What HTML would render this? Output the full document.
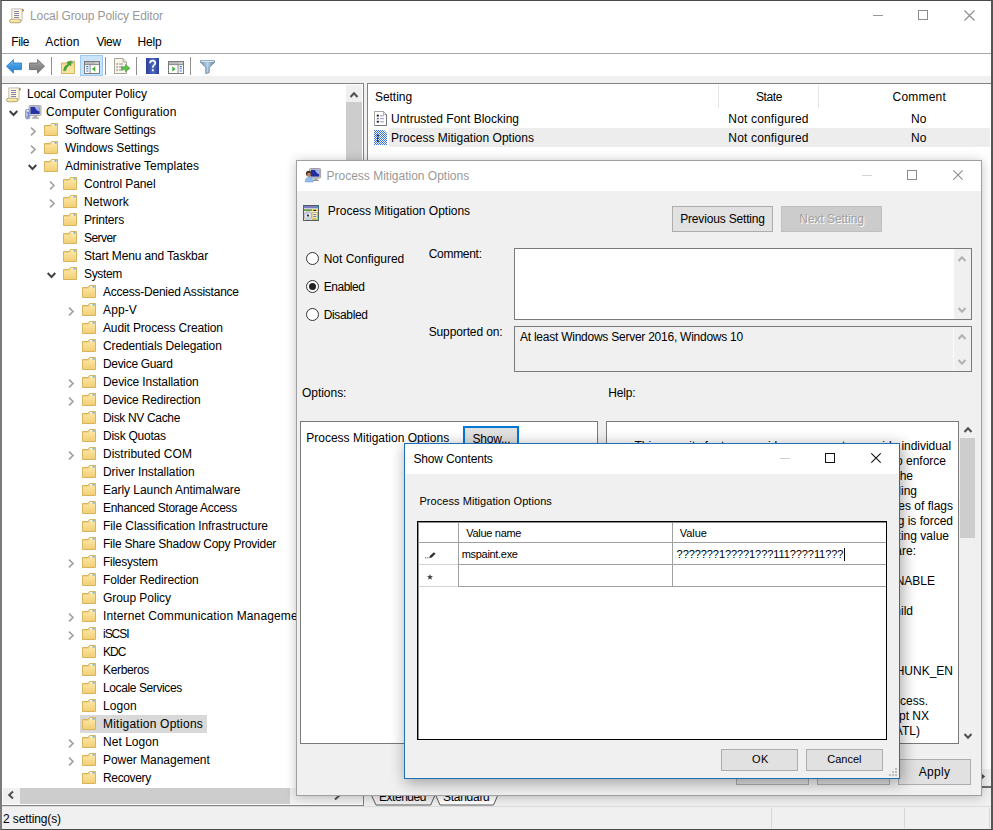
<!DOCTYPE html>
<html><head><meta charset="utf-8"><title>Local Group Policy Editor</title><style>
html,body{margin:0;padding:0;}
body{width:993px;height:830px;overflow:hidden;background:#f0f0f0;position:relative;font-family:"Liberation Sans", sans-serif;font-size:12px;}
.b{position:absolute;box-sizing:border-box;}
.t{position:absolute;white-space:nowrap;display:block;}
svg{overflow:visible;}
</style></head>
<body>
<svg width="0" height="0" style="position:absolute"><defs><linearGradient id="fg" x1="0" y1="0" x2="0" y2="1"><stop offset="0" stop-color="#fbe6a2"/><stop offset="1" stop-color="#f2cf74"/></linearGradient></defs></svg>
<div class="b" style="left:0px;top:0px;width:993px;height:76px;background:#fff;"></div>
<svg class="b" style="left:9px;top:8px;" width="16" height="16" viewBox="0 0 16 16"><path d="M2.8 0.9 H12.4 Q14.9 0.9 14.7 2.9 L13.1 3.6 V12.6 H2.8 Z" fill="#fdf7dc" stroke="#b3abb3" stroke-width="0.8"/><path d="M12.6 1 Q15 0.9 14.7 3 L13.2 3.5 Z" fill="#9a8644"/><rect x="0.6" y="11.3" width="11.2" height="3.5" rx="1.7" fill="#f6df96" stroke="#a69868" stroke-width="0.8"/><path d="M1.8 12.3 H10" stroke="#fff6cf" stroke-width="0.8"/><path d="M5 3.5 H10 M5 5.5 H10 M5 7.5 H10 M5 9.5 H10" stroke="#8882b4" stroke-width="1"/></svg>
<span id="t1" class="t " style="left:30px;top:8px;height:16px;line-height:16px;font-size:12px;color:#999999;letter-spacing:-0.096px;">Local Group Policy Editor</span>
<svg class="b" style="left:873px;top:15px;" width="10" height="1" viewBox="0 0 10 1"><rect width="10" height="1" fill="#999"/></svg>
<div class="b" style="left:918px;top:10px;width:10px;height:10px;border:1px solid #8c8c8c;"></div>
<svg class="b" style="left:964px;top:10px;" width="11" height="11" viewBox="0 0 11 11"><path d="M0.5 0.5 L10.5 10.5 M10.5 0.5 L0.5 10.5" stroke="#8c8c8c" stroke-width="1.1"/></svg>
<span id="t2" class="t " style="left:11.2px;top:34px;height:16px;line-height:16px;font-size:12px;color:#000;letter-spacing:-0.336px;">File</span>
<span id="t3" class="t " style="left:45.3px;top:34px;height:16px;line-height:16px;font-size:12px;color:#000;letter-spacing:0.157px;">Action</span>
<span id="t4" class="t " style="left:96.4px;top:34px;height:16px;line-height:16px;font-size:12px;color:#000;letter-spacing:-0.374px;">View</span>
<span id="t5" class="t " style="left:137.4px;top:34px;height:16px;line-height:16px;font-size:12px;color:#000;letter-spacing:-0.147px;">Help</span>
<div class="b" style="left:0px;top:53px;width:993px;height:1px;background:#a9a9a9;"></div>
<svg class="b" style="left:6px;top:59px;" width="16" height="15" viewBox="0 0 16 15"><defs><linearGradient id="bk" x1="0" y1="0" x2="0" y2="1"><stop offset="0" stop-color="#7cc4f4"/><stop offset="0.5" stop-color="#3c96e0"/><stop offset="1" stop-color="#2a7cd0"/></linearGradient></defs><path d="M0.5 7.2 L7.4 0.6 V4 H15.5 V10.6 H7.4 V14 Z" fill="url(#bk)" stroke="#2f7fcc" stroke-width="0.9" stroke-linejoin="round"/></svg>
<svg class="b" style="left:29px;top:59px;" width="16" height="15" viewBox="0 0 16 15"><defs><linearGradient id="fw" x1="0" y1="0" x2="0" y2="1"><stop offset="0" stop-color="#b5b5b5"/><stop offset="0.5" stop-color="#8a8a8a"/><stop offset="1" stop-color="#7a7a7a"/></linearGradient></defs><path d="M15.5 7.2 L8.6 0.6 V4 H0.5 V10.6 H8.6 V14 Z" fill="url(#fw)" stroke="#6c6c6c" stroke-width="0.9" stroke-linejoin="round"/></svg>
<div class="b" style="left:51px;top:57px;width:1px;height:18px;background:#8f8f8f;"></div>
<svg class="b" style="left:61px;top:59.5px;" width="14" height="14" viewBox="0 0 14 14"><path d="M0.5 3 H6 L7.5 1.2 H13.5 V13.5 H0.5Z" fill="#f3d98a" stroke="#d4ae58" stroke-width="0.9"/><path d="M1 5 H13 V13 H1Z" fill="#f7e3a0"/><rect x="9" y="2" width="3.5" height="1.2" fill="#5b9bd8"/><path d="M2.5 10.5 Q3 5.5 7 4.2 L6 2.2 L10.3 1.2 L9.8 5.8 L8.3 4.9 Q5.5 7 4.6 10.8Z" fill="#4aa83a" stroke="#2f8a2a" stroke-width="0.5"/></svg>
<div class="b" style="left:80px;top:55px;width:23px;height:21px;background:#cce4f7;border:1px solid #9ccaf0;"></div>
<svg class="b" style="left:84px;top:61px;" width="16" height="13" viewBox="0 0 16 13"><rect x="0.5" y="0.5" width="15" height="12" fill="#fff" stroke="#7a7a7a" stroke-width="1"/><rect x="1" y="1" width="14" height="2.2" fill="#b8b8b8"/><rect x="1" y="3.2" width="14" height="0.9" fill="#7a7a7a"/><rect x="5.6" y="4" width="0.9" height="8" fill="#7a7a7a"/><path d="M2.2 5.6 H4.4 M2.2 7.8 H4.4 M2.2 10 H4.4" stroke="#3a78c8" stroke-width="1.1"/><rect x="11.5" y="1.5" width="1" height="1" fill="#fff"/><rect x="13.2" y="1.5" width="1" height="1" fill="#fff"/><path d="M8 8 L11.3 5.3 V10.7Z" fill="#3fae3a"/></svg>
<div class="b" style="left:105px;top:57px;width:1px;height:18px;background:#8f8f8f;"></div>
<svg class="b" style="left:114px;top:58px;" width="16" height="16" viewBox="0 0 16 16"><path d="M0.5 0.5 H9 L12.5 4 V15.5 H0.5Z" fill="#fbf6e4" stroke="#9c9c94" stroke-width="0.9"/><path d="M9 0.5 V4 H12.5" fill="#e8e4d0" stroke="#9c9c94" stroke-width="0.8"/><path d="M2.5 6 H3.8 M2.5 9 H3.8 M2.5 12 H3.8" stroke="#444" stroke-width="1.2"/><path d="M5 6 H9 M5 9 H8 M5 12 H9" stroke="#8a8ab8" stroke-width="1"/><path d="M7.5 8.8 H11.5 V6.6 L16 10.2 L11.5 13.8 V11.6 H7.5Z" fill="#5cc04a" stroke="#3a9a30" stroke-width="0.6"/></svg>
<div class="b" style="left:136px;top:57px;width:1px;height:18px;background:#8f8f8f;"></div>
<svg class="b" style="left:146px;top:58px;" width="13" height="16" viewBox="0 0 13 16"><defs><linearGradient id="hp" x1="0" y1="0" x2="1" y2="0"><stop offset="0" stop-color="#2a3f9a"/><stop offset="0.55" stop-color="#5068c0"/><stop offset="1" stop-color="#2a3f9a"/></linearGradient></defs><rect x="0" y="0" width="13" height="16" fill="url(#hp)"/><path d="M4 5.2 Q4 2.6 6.6 2.6 Q9.2 2.6 9.2 5 Q9.2 6.4 7.8 7.4 Q6.8 8.2 6.8 9.8" fill="none" stroke="#fff" stroke-width="1.7"/><rect x="5.9" y="11.3" width="1.8" height="1.9" fill="#fff"/></svg>
<svg class="b" style="left:168px;top:61px;" width="16" height="13" viewBox="0 0 16 13"><rect x="0.5" y="0.5" width="15" height="12" fill="#fff" stroke="#7a7a7a" stroke-width="1"/><rect x="1" y="1" width="14" height="2.2" fill="#b8b8b8"/><rect x="1" y="3.2" width="14" height="0.9" fill="#7a7a7a"/><rect x="9.6" y="4" width="0.9" height="8" fill="#7a7a7a"/><path d="M11.6 5.6 H13.8 M11.6 7.8 H13.8 M11.6 10 H13.8" stroke="#3a78c8" stroke-width="1.1"/><rect x="11.5" y="1.5" width="1" height="1" fill="#fff"/><rect x="13.2" y="1.5" width="1" height="1" fill="#fff"/><path d="M7.6 8 L4.3 5.3 V10.7Z" fill="#3fae3a"/></svg>
<div class="b" style="left:190px;top:57px;width:1px;height:18px;background:#8f8f8f;"></div>
<svg class="b" style="left:200px;top:60px;" width="15" height="14" viewBox="0 0 15 14"><defs><linearGradient id="fl" x1="0" y1="0" x2="1" y2="0"><stop offset="0" stop-color="#6f93b4"/><stop offset="0.5" stop-color="#b8d0e4"/><stop offset="1" stop-color="#5f83a6"/></linearGradient></defs><path d="M0.5 0.8 H14.5 V2.2 L9.2 7.6 V12.6 L5.8 13.6 V7.6 L0.5 2.2Z" fill="url(#fl)" stroke="#5a7c9c" stroke-width="0.8" stroke-linejoin="round"/><rect x="1" y="1" width="13" height="1" fill="#d8e6f2"/></svg>
<div class="b" style="left:0px;top:76px;width:993px;height:7px;background:#f0f0f0;"></div>
<div class="b" style="left:2px;top:83px;width:362px;height:723px;background:#fff;border-top:1px solid #828282;border-right:1px solid #828282;border-bottom:1px solid #828282;"></div>
<svg class="b" style="left:6px;top:87px;" width="16" height="16" viewBox="0 0 16 16"><path d="M2.8 0.9 H12.4 Q14.9 0.9 14.7 2.9 L13.1 3.6 V12.6 H2.8 Z" fill="#fdf7dc" stroke="#b3abb3" stroke-width="0.8"/><path d="M12.6 1 Q15 0.9 14.7 3 L13.2 3.5 Z" fill="#9a8644"/><rect x="0.6" y="11.3" width="11.2" height="3.5" rx="1.7" fill="#f6df96" stroke="#a69868" stroke-width="0.8"/><path d="M1.8 12.3 H10" stroke="#fff6cf" stroke-width="0.8"/><path d="M5 3.5 H10 M5 5.5 H10 M5 7.5 H10 M5 9.5 H10" stroke="#8882b4" stroke-width="1"/></svg>
<span id="t6" class="t " style="left:27px;top:86px;height:16px;line-height:16px;font-size:12px;color:#000;letter-spacing:-0.003px;">Local Computer Policy</span>
<svg class="b" style="left:9px;top:110px;" width="9" height="6" viewBox="0 0 9 6"><path d="M0.7 1 L4.5 5 L8.3 1" fill="none" stroke="#404040" stroke-width="1.9"/></svg>
<svg class="b" style="left:25px;top:105px;" width="16" height="14" viewBox="0 0 16 14"><rect x="4" y="0.5" width="12" height="10" rx="0.8" fill="#d4d4d4" stroke="#9a9a9a" stroke-width="0.8"/><rect x="5.4" y="1.8" width="9.2" height="7.2" fill="#2632a6"/><path d="M9.6 1.8 H14.6 V6.6 Q11.2 5.8 9.6 1.8Z" fill="#b0bcec" opacity="0.9"/><rect x="8.6" y="10.6" width="3.4" height="2" fill="#b0b0b0"/><rect x="6.8" y="12.4" width="7" height="1.3" fill="#a0a0a0"/><rect x="0.6" y="4.4" width="4.2" height="9.4" rx="1.4" fill="#b9c3d8" stroke="#7484ac" stroke-width="0.8"/><rect x="2" y="7" width="1.5" height="5.6" fill="#2f62cc"/><rect x="2.3" y="7.6" width="0.7" height="4" fill="#cfe0ff"/><circle cx="2.7" cy="5.6" r="0.8" fill="#f4f6fa"/></svg>
<span id="t7" class="t " style="left:46px;top:104px;height:16px;line-height:16px;font-size:12px;color:#000;letter-spacing:0.141px;">Computer Configuration</span>
<svg class="b" style="left:29.5px;top:127px;" width="6" height="9" viewBox="0 0 6 9"><path d="M1 0.7 L5 4.5 L1 8.3" fill="none" stroke="#a0a0a0" stroke-width="1.6"/></svg>
<svg class="b" style="left:44px;top:123px;" width="14" height="13" viewBox="0 0 14 13"><path d="M0.5 2.5 H6 L7.5 0.5 H13.5 V12.5 H0.5 Z" fill="#f2d27c" stroke="#d9b45e" stroke-width="1"/><path d="M1 4 H6.5 L7.5 3 H13 V12 H1 Z" fill="url(#fg)"/><rect x="8" y="1.2" width="4.5" height="1.3" fill="#fff"/><rect x="10.5" y="1.2" width="2" height="1.3" fill="#5b9bd8"/></svg>
<span id="t8" class="t " style="left:65px;top:122px;height:16px;line-height:16px;font-size:12px;color:#000;letter-spacing:-0.210px;">Software Settings</span>
<svg class="b" style="left:29.5px;top:145px;" width="6" height="9" viewBox="0 0 6 9"><path d="M1 0.7 L5 4.5 L1 8.3" fill="none" stroke="#a0a0a0" stroke-width="1.6"/></svg>
<svg class="b" style="left:44px;top:141px;" width="14" height="13" viewBox="0 0 14 13"><path d="M0.5 2.5 H6 L7.5 0.5 H13.5 V12.5 H0.5 Z" fill="#f2d27c" stroke="#d9b45e" stroke-width="1"/><path d="M1 4 H6.5 L7.5 3 H13 V12 H1 Z" fill="url(#fg)"/><rect x="8" y="1.2" width="4.5" height="1.3" fill="#fff"/><rect x="10.5" y="1.2" width="2" height="1.3" fill="#5b9bd8"/></svg>
<span id="t9" class="t " style="left:65px;top:140px;height:16px;line-height:16px;font-size:12px;color:#000;letter-spacing:-0.086px;">Windows Settings</span>
<svg class="b" style="left:28px;top:164px;" width="9" height="6" viewBox="0 0 9 6"><path d="M0.7 1 L4.5 5 L8.3 1" fill="none" stroke="#404040" stroke-width="1.9"/></svg>
<svg class="b" style="left:44px;top:159px;" width="14" height="13" viewBox="0 0 14 13"><path d="M0.5 2.5 H6 L7.5 0.5 H13.5 V12.5 H0.5 Z" fill="#f2d27c" stroke="#d9b45e" stroke-width="1"/><path d="M1 4 H6.5 L7.5 3 H13 V12 H1 Z" fill="url(#fg)"/><rect x="8" y="1.2" width="4.5" height="1.3" fill="#fff"/><rect x="10.5" y="1.2" width="2" height="1.3" fill="#5b9bd8"/></svg>
<span id="t10" class="t " style="left:65px;top:158px;height:16px;line-height:16px;font-size:12px;color:#000;letter-spacing:0.035px;">Administrative Templates</span>
<svg class="b" style="left:48.5px;top:181px;" width="6" height="9" viewBox="0 0 6 9"><path d="M1 0.7 L5 4.5 L1 8.3" fill="none" stroke="#a0a0a0" stroke-width="1.6"/></svg>
<svg class="b" style="left:63px;top:177px;" width="14" height="13" viewBox="0 0 14 13"><path d="M0.5 2.5 H6 L7.5 0.5 H13.5 V12.5 H0.5 Z" fill="#f2d27c" stroke="#d9b45e" stroke-width="1"/><path d="M1 4 H6.5 L7.5 3 H13 V12 H1 Z" fill="url(#fg)"/><rect x="8" y="1.2" width="4.5" height="1.3" fill="#fff"/><rect x="10.5" y="1.2" width="2" height="1.3" fill="#5b9bd8"/></svg>
<span id="t11" class="t " style="left:84px;top:176px;height:16px;line-height:16px;font-size:12px;color:#000;letter-spacing:-0.094px;">Control Panel</span>
<svg class="b" style="left:48.5px;top:199px;" width="6" height="9" viewBox="0 0 6 9"><path d="M1 0.7 L5 4.5 L1 8.3" fill="none" stroke="#a0a0a0" stroke-width="1.6"/></svg>
<svg class="b" style="left:63px;top:195px;" width="14" height="13" viewBox="0 0 14 13"><path d="M0.5 2.5 H6 L7.5 0.5 H13.5 V12.5 H0.5 Z" fill="#f2d27c" stroke="#d9b45e" stroke-width="1"/><path d="M1 4 H6.5 L7.5 3 H13 V12 H1 Z" fill="url(#fg)"/><rect x="8" y="1.2" width="4.5" height="1.3" fill="#fff"/><rect x="10.5" y="1.2" width="2" height="1.3" fill="#5b9bd8"/></svg>
<span id="t12" class="t " style="left:84px;top:194px;height:16px;line-height:16px;font-size:12px;color:#000;letter-spacing:0.141px;">Network</span>
<svg class="b" style="left:63px;top:213px;" width="14" height="13" viewBox="0 0 14 13"><path d="M0.5 2.5 H6 L7.5 0.5 H13.5 V12.5 H0.5 Z" fill="#f2d27c" stroke="#d9b45e" stroke-width="1"/><path d="M1 4 H6.5 L7.5 3 H13 V12 H1 Z" fill="url(#fg)"/><rect x="8" y="1.2" width="4.5" height="1.3" fill="#fff"/><rect x="10.5" y="1.2" width="2" height="1.3" fill="#5b9bd8"/></svg>
<span id="t13" class="t " style="left:84px;top:212px;height:16px;line-height:16px;font-size:12px;color:#000;letter-spacing:-0.168px;">Printers</span>
<svg class="b" style="left:63px;top:231px;" width="14" height="13" viewBox="0 0 14 13"><path d="M0.5 2.5 H6 L7.5 0.5 H13.5 V12.5 H0.5 Z" fill="#f2d27c" stroke="#d9b45e" stroke-width="1"/><path d="M1 4 H6.5 L7.5 3 H13 V12 H1 Z" fill="url(#fg)"/><rect x="8" y="1.2" width="4.5" height="1.3" fill="#fff"/><rect x="10.5" y="1.2" width="2" height="1.3" fill="#5b9bd8"/></svg>
<span id="t14" class="t " style="left:84px;top:230px;height:16px;line-height:16px;font-size:12px;color:#000;letter-spacing:-0.557px;">Server</span>
<svg class="b" style="left:63px;top:249px;" width="14" height="13" viewBox="0 0 14 13"><path d="M0.5 2.5 H6 L7.5 0.5 H13.5 V12.5 H0.5 Z" fill="#f2d27c" stroke="#d9b45e" stroke-width="1"/><path d="M1 4 H6.5 L7.5 3 H13 V12 H1 Z" fill="url(#fg)"/><rect x="8" y="1.2" width="4.5" height="1.3" fill="#fff"/><rect x="10.5" y="1.2" width="2" height="1.3" fill="#5b9bd8"/></svg>
<span id="t15" class="t " style="left:84px;top:248px;height:16px;line-height:16px;font-size:12px;color:#000;letter-spacing:-0.145px;">Start Menu and Taskbar</span>
<svg class="b" style="left:47px;top:272px;" width="9" height="6" viewBox="0 0 9 6"><path d="M0.7 1 L4.5 5 L8.3 1" fill="none" stroke="#404040" stroke-width="1.9"/></svg>
<svg class="b" style="left:63px;top:267px;" width="14" height="13" viewBox="0 0 14 13"><path d="M0.5 2.5 H6 L7.5 0.5 H13.5 V12.5 H0.5 Z" fill="#f2d27c" stroke="#d9b45e" stroke-width="1"/><path d="M1 4 H6.5 L7.5 3 H13 V12 H1 Z" fill="url(#fg)"/><rect x="8" y="1.2" width="4.5" height="1.3" fill="#fff"/><rect x="10.5" y="1.2" width="2" height="1.3" fill="#5b9bd8"/></svg>
<span id="t16" class="t " style="left:84px;top:266px;height:16px;line-height:16px;font-size:12px;color:#000;letter-spacing:-0.336px;">System</span>
<svg class="b" style="left:82px;top:285px;" width="14" height="13" viewBox="0 0 14 13"><path d="M0.5 2.5 H6 L7.5 0.5 H13.5 V12.5 H0.5 Z" fill="#f2d27c" stroke="#d9b45e" stroke-width="1"/><path d="M1 4 H6.5 L7.5 3 H13 V12 H1 Z" fill="url(#fg)"/><rect x="8" y="1.2" width="4.5" height="1.3" fill="#fff"/><rect x="10.5" y="1.2" width="2" height="1.3" fill="#5b9bd8"/></svg>
<span id="t17" class="t " style="left:103px;top:284px;height:16px;line-height:16px;font-size:12px;color:#000;letter-spacing:-0.234px;">Access-Denied Assistance</span>
<svg class="b" style="left:67.5px;top:307px;" width="6" height="9" viewBox="0 0 6 9"><path d="M1 0.7 L5 4.5 L1 8.3" fill="none" stroke="#a0a0a0" stroke-width="1.6"/></svg>
<svg class="b" style="left:82px;top:303px;" width="14" height="13" viewBox="0 0 14 13"><path d="M0.5 2.5 H6 L7.5 0.5 H13.5 V12.5 H0.5 Z" fill="#f2d27c" stroke="#d9b45e" stroke-width="1"/><path d="M1 4 H6.5 L7.5 3 H13 V12 H1 Z" fill="url(#fg)"/><rect x="8" y="1.2" width="4.5" height="1.3" fill="#fff"/><rect x="10.5" y="1.2" width="2" height="1.3" fill="#5b9bd8"/></svg>
<span id="t18" class="t " style="left:103px;top:302px;height:16px;line-height:16px;font-size:12px;color:#000;letter-spacing:0.128px;">App-V</span>
<svg class="b" style="left:82px;top:321px;" width="14" height="13" viewBox="0 0 14 13"><path d="M0.5 2.5 H6 L7.5 0.5 H13.5 V12.5 H0.5 Z" fill="#f2d27c" stroke="#d9b45e" stroke-width="1"/><path d="M1 4 H6.5 L7.5 3 H13 V12 H1 Z" fill="url(#fg)"/><rect x="8" y="1.2" width="4.5" height="1.3" fill="#fff"/><rect x="10.5" y="1.2" width="2" height="1.3" fill="#5b9bd8"/></svg>
<span id="t19" class="t " style="left:103px;top:320px;height:16px;line-height:16px;font-size:12px;color:#000;letter-spacing:-0.133px;">Audit Process Creation</span>
<svg class="b" style="left:82px;top:339px;" width="14" height="13" viewBox="0 0 14 13"><path d="M0.5 2.5 H6 L7.5 0.5 H13.5 V12.5 H0.5 Z" fill="#f2d27c" stroke="#d9b45e" stroke-width="1"/><path d="M1 4 H6.5 L7.5 3 H13 V12 H1 Z" fill="url(#fg)"/><rect x="8" y="1.2" width="4.5" height="1.3" fill="#fff"/><rect x="10.5" y="1.2" width="2" height="1.3" fill="#5b9bd8"/></svg>
<span id="t20" class="t " style="left:103px;top:338px;height:16px;line-height:16px;font-size:12px;color:#000;letter-spacing:-0.123px;">Credentials Delegation</span>
<svg class="b" style="left:82px;top:357px;" width="14" height="13" viewBox="0 0 14 13"><path d="M0.5 2.5 H6 L7.5 0.5 H13.5 V12.5 H0.5 Z" fill="#f2d27c" stroke="#d9b45e" stroke-width="1"/><path d="M1 4 H6.5 L7.5 3 H13 V12 H1 Z" fill="url(#fg)"/><rect x="8" y="1.2" width="4.5" height="1.3" fill="#fff"/><rect x="10.5" y="1.2" width="2" height="1.3" fill="#5b9bd8"/></svg>
<span id="t21" class="t " style="left:103px;top:356px;height:16px;line-height:16px;font-size:12px;color:#000;letter-spacing:-0.323px;">Device Guard</span>
<svg class="b" style="left:67.5px;top:379px;" width="6" height="9" viewBox="0 0 6 9"><path d="M1 0.7 L5 4.5 L1 8.3" fill="none" stroke="#a0a0a0" stroke-width="1.6"/></svg>
<svg class="b" style="left:82px;top:375px;" width="14" height="13" viewBox="0 0 14 13"><path d="M0.5 2.5 H6 L7.5 0.5 H13.5 V12.5 H0.5 Z" fill="#f2d27c" stroke="#d9b45e" stroke-width="1"/><path d="M1 4 H6.5 L7.5 3 H13 V12 H1 Z" fill="url(#fg)"/><rect x="8" y="1.2" width="4.5" height="1.3" fill="#fff"/><rect x="10.5" y="1.2" width="2" height="1.3" fill="#5b9bd8"/></svg>
<span id="t22" class="t " style="left:103px;top:374px;height:16px;line-height:16px;font-size:12px;color:#000;letter-spacing:-0.094px;">Device Installation</span>
<svg class="b" style="left:67.5px;top:397px;" width="6" height="9" viewBox="0 0 6 9"><path d="M1 0.7 L5 4.5 L1 8.3" fill="none" stroke="#a0a0a0" stroke-width="1.6"/></svg>
<svg class="b" style="left:82px;top:393px;" width="14" height="13" viewBox="0 0 14 13"><path d="M0.5 2.5 H6 L7.5 0.5 H13.5 V12.5 H0.5 Z" fill="#f2d27c" stroke="#d9b45e" stroke-width="1"/><path d="M1 4 H6.5 L7.5 3 H13 V12 H1 Z" fill="url(#fg)"/><rect x="8" y="1.2" width="4.5" height="1.3" fill="#fff"/><rect x="10.5" y="1.2" width="2" height="1.3" fill="#5b9bd8"/></svg>
<span id="t23" class="t " style="left:103px;top:392px;height:16px;line-height:16px;font-size:12px;color:#000;letter-spacing:-0.184px;">Device Redirection</span>
<svg class="b" style="left:82px;top:411px;" width="14" height="13" viewBox="0 0 14 13"><path d="M0.5 2.5 H6 L7.5 0.5 H13.5 V12.5 H0.5 Z" fill="#f2d27c" stroke="#d9b45e" stroke-width="1"/><path d="M1 4 H6.5 L7.5 3 H13 V12 H1 Z" fill="url(#fg)"/><rect x="8" y="1.2" width="4.5" height="1.3" fill="#fff"/><rect x="10.5" y="1.2" width="2" height="1.3" fill="#5b9bd8"/></svg>
<span id="t24" class="t " style="left:103px;top:410px;height:16px;line-height:16px;font-size:12px;color:#000;letter-spacing:-0.335px;">Disk NV Cache</span>
<svg class="b" style="left:82px;top:429px;" width="14" height="13" viewBox="0 0 14 13"><path d="M0.5 2.5 H6 L7.5 0.5 H13.5 V12.5 H0.5 Z" fill="#f2d27c" stroke="#d9b45e" stroke-width="1"/><path d="M1 4 H6.5 L7.5 3 H13 V12 H1 Z" fill="url(#fg)"/><rect x="8" y="1.2" width="4.5" height="1.3" fill="#fff"/><rect x="10.5" y="1.2" width="2" height="1.3" fill="#5b9bd8"/></svg>
<span id="t25" class="t " style="left:103px;top:428px;height:16px;line-height:16px;font-size:12px;color:#000;letter-spacing:-0.233px;">Disk Quotas</span>
<svg class="b" style="left:67.5px;top:451px;" width="6" height="9" viewBox="0 0 6 9"><path d="M1 0.7 L5 4.5 L1 8.3" fill="none" stroke="#a0a0a0" stroke-width="1.6"/></svg>
<svg class="b" style="left:82px;top:447px;" width="14" height="13" viewBox="0 0 14 13"><path d="M0.5 2.5 H6 L7.5 0.5 H13.5 V12.5 H0.5 Z" fill="#f2d27c" stroke="#d9b45e" stroke-width="1"/><path d="M1 4 H6.5 L7.5 3 H13 V12 H1 Z" fill="url(#fg)"/><rect x="8" y="1.2" width="4.5" height="1.3" fill="#fff"/><rect x="10.5" y="1.2" width="2" height="1.3" fill="#5b9bd8"/></svg>
<span id="t26" class="t " style="left:103px;top:446px;height:16px;line-height:16px;font-size:12px;color:#000;letter-spacing:0.014px;">Distributed COM</span>
<svg class="b" style="left:82px;top:465px;" width="14" height="13" viewBox="0 0 14 13"><path d="M0.5 2.5 H6 L7.5 0.5 H13.5 V12.5 H0.5 Z" fill="#f2d27c" stroke="#d9b45e" stroke-width="1"/><path d="M1 4 H6.5 L7.5 3 H13 V12 H1 Z" fill="url(#fg)"/><rect x="8" y="1.2" width="4.5" height="1.3" fill="#fff"/><rect x="10.5" y="1.2" width="2" height="1.3" fill="#5b9bd8"/></svg>
<span id="t27" class="t " style="left:103px;top:464px;height:16px;line-height:16px;font-size:12px;color:#000;letter-spacing:-0.063px;">Driver Installation</span>
<svg class="b" style="left:82px;top:483px;" width="14" height="13" viewBox="0 0 14 13"><path d="M0.5 2.5 H6 L7.5 0.5 H13.5 V12.5 H0.5 Z" fill="#f2d27c" stroke="#d9b45e" stroke-width="1"/><path d="M1 4 H6.5 L7.5 3 H13 V12 H1 Z" fill="url(#fg)"/><rect x="8" y="1.2" width="4.5" height="1.3" fill="#fff"/><rect x="10.5" y="1.2" width="2" height="1.3" fill="#5b9bd8"/></svg>
<span id="t28" class="t " style="left:103px;top:482px;height:16px;line-height:16px;font-size:12px;color:#000;letter-spacing:-0.060px;">Early Launch Antimalware</span>
<svg class="b" style="left:82px;top:501px;" width="14" height="13" viewBox="0 0 14 13"><path d="M0.5 2.5 H6 L7.5 0.5 H13.5 V12.5 H0.5 Z" fill="#f2d27c" stroke="#d9b45e" stroke-width="1"/><path d="M1 4 H6.5 L7.5 3 H13 V12 H1 Z" fill="url(#fg)"/><rect x="8" y="1.2" width="4.5" height="1.3" fill="#fff"/><rect x="10.5" y="1.2" width="2" height="1.3" fill="#5b9bd8"/></svg>
<span id="t29" class="t " style="left:103px;top:500px;height:16px;line-height:16px;font-size:12px;color:#000;letter-spacing:-0.294px;">Enhanced Storage Access</span>
<svg class="b" style="left:82px;top:519px;" width="14" height="13" viewBox="0 0 14 13"><path d="M0.5 2.5 H6 L7.5 0.5 H13.5 V12.5 H0.5 Z" fill="#f2d27c" stroke="#d9b45e" stroke-width="1"/><path d="M1 4 H6.5 L7.5 3 H13 V12 H1 Z" fill="url(#fg)"/><rect x="8" y="1.2" width="4.5" height="1.3" fill="#fff"/><rect x="10.5" y="1.2" width="2" height="1.3" fill="#5b9bd8"/></svg>
<span id="t30" class="t " style="left:103px;top:518px;height:16px;line-height:16px;font-size:12px;color:#000;letter-spacing:-0.073px;">File Classification Infrastructure</span>
<svg class="b" style="left:82px;top:537px;" width="14" height="13" viewBox="0 0 14 13"><path d="M0.5 2.5 H6 L7.5 0.5 H13.5 V12.5 H0.5 Z" fill="#f2d27c" stroke="#d9b45e" stroke-width="1"/><path d="M1 4 H6.5 L7.5 3 H13 V12 H1 Z" fill="url(#fg)"/><rect x="8" y="1.2" width="4.5" height="1.3" fill="#fff"/><rect x="10.5" y="1.2" width="2" height="1.3" fill="#5b9bd8"/></svg>
<span id="t31" class="t " style="left:103px;top:536px;height:16px;line-height:16px;font-size:12px;color:#000;letter-spacing:-0.247px;">File Share Shadow Copy Provider</span>
<svg class="b" style="left:67.5px;top:559px;" width="6" height="9" viewBox="0 0 6 9"><path d="M1 0.7 L5 4.5 L1 8.3" fill="none" stroke="#a0a0a0" stroke-width="1.6"/></svg>
<svg class="b" style="left:82px;top:555px;" width="14" height="13" viewBox="0 0 14 13"><path d="M0.5 2.5 H6 L7.5 0.5 H13.5 V12.5 H0.5 Z" fill="#f2d27c" stroke="#d9b45e" stroke-width="1"/><path d="M1 4 H6.5 L7.5 3 H13 V12 H1 Z" fill="url(#fg)"/><rect x="8" y="1.2" width="4.5" height="1.3" fill="#fff"/><rect x="10.5" y="1.2" width="2" height="1.3" fill="#5b9bd8"/></svg>
<span id="t32" class="t " style="left:103px;top:554px;height:16px;line-height:16px;font-size:12px;color:#000;letter-spacing:-0.274px;">Filesystem</span>
<svg class="b" style="left:82px;top:573px;" width="14" height="13" viewBox="0 0 14 13"><path d="M0.5 2.5 H6 L7.5 0.5 H13.5 V12.5 H0.5 Z" fill="#f2d27c" stroke="#d9b45e" stroke-width="1"/><path d="M1 4 H6.5 L7.5 3 H13 V12 H1 Z" fill="url(#fg)"/><rect x="8" y="1.2" width="4.5" height="1.3" fill="#fff"/><rect x="10.5" y="1.2" width="2" height="1.3" fill="#5b9bd8"/></svg>
<span id="t33" class="t " style="left:103px;top:572px;height:16px;line-height:16px;font-size:12px;color:#000;letter-spacing:-0.136px;">Folder Redirection</span>
<svg class="b" style="left:82px;top:591px;" width="14" height="13" viewBox="0 0 14 13"><path d="M0.5 2.5 H6 L7.5 0.5 H13.5 V12.5 H0.5 Z" fill="#f2d27c" stroke="#d9b45e" stroke-width="1"/><path d="M1 4 H6.5 L7.5 3 H13 V12 H1 Z" fill="url(#fg)"/><rect x="8" y="1.2" width="4.5" height="1.3" fill="#fff"/><rect x="10.5" y="1.2" width="2" height="1.3" fill="#5b9bd8"/></svg>
<span id="t34" class="t " style="left:103px;top:590px;height:16px;line-height:16px;font-size:12px;color:#000;letter-spacing:-0.059px;">Group Policy</span>
<svg class="b" style="left:67.5px;top:613px;" width="6" height="9" viewBox="0 0 6 9"><path d="M1 0.7 L5 4.5 L1 8.3" fill="none" stroke="#a0a0a0" stroke-width="1.6"/></svg>
<svg class="b" style="left:82px;top:609px;" width="14" height="13" viewBox="0 0 14 13"><path d="M0.5 2.5 H6 L7.5 0.5 H13.5 V12.5 H0.5 Z" fill="#f2d27c" stroke="#d9b45e" stroke-width="1"/><path d="M1 4 H6.5 L7.5 3 H13 V12 H1 Z" fill="url(#fg)"/><rect x="8" y="1.2" width="4.5" height="1.3" fill="#fff"/><rect x="10.5" y="1.2" width="2" height="1.3" fill="#5b9bd8"/></svg>
<span id="t35" class="t " style="left:103px;top:608px;height:16px;line-height:16px;font-size:12px;color:#000;letter-spacing:0.128px;">Internet Communication Management</span>
<svg class="b" style="left:67.5px;top:631px;" width="6" height="9" viewBox="0 0 6 9"><path d="M1 0.7 L5 4.5 L1 8.3" fill="none" stroke="#a0a0a0" stroke-width="1.6"/></svg>
<svg class="b" style="left:82px;top:627px;" width="14" height="13" viewBox="0 0 14 13"><path d="M0.5 2.5 H6 L7.5 0.5 H13.5 V12.5 H0.5 Z" fill="#f2d27c" stroke="#d9b45e" stroke-width="1"/><path d="M1 4 H6.5 L7.5 3 H13 V12 H1 Z" fill="url(#fg)"/><rect x="8" y="1.2" width="4.5" height="1.3" fill="#fff"/><rect x="10.5" y="1.2" width="2" height="1.3" fill="#5b9bd8"/></svg>
<span id="t36" class="t " style="left:103px;top:626px;height:16px;line-height:16px;font-size:12px;color:#000;letter-spacing:-1.038px;">iSCSI</span>
<svg class="b" style="left:82px;top:645px;" width="14" height="13" viewBox="0 0 14 13"><path d="M0.5 2.5 H6 L7.5 0.5 H13.5 V12.5 H0.5 Z" fill="#f2d27c" stroke="#d9b45e" stroke-width="1"/><path d="M1 4 H6.5 L7.5 3 H13 V12 H1 Z" fill="url(#fg)"/><rect x="8" y="1.2" width="4.5" height="1.3" fill="#fff"/><rect x="10.5" y="1.2" width="2" height="1.3" fill="#5b9bd8"/></svg>
<span id="t37" class="t " style="left:103px;top:644px;height:16px;line-height:16px;font-size:12px;color:#000;letter-spacing:-0.915px;">KDC</span>
<svg class="b" style="left:82px;top:663px;" width="14" height="13" viewBox="0 0 14 13"><path d="M0.5 2.5 H6 L7.5 0.5 H13.5 V12.5 H0.5 Z" fill="#f2d27c" stroke="#d9b45e" stroke-width="1"/><path d="M1 4 H6.5 L7.5 3 H13 V12 H1 Z" fill="url(#fg)"/><rect x="8" y="1.2" width="4.5" height="1.3" fill="#fff"/><rect x="10.5" y="1.2" width="2" height="1.3" fill="#5b9bd8"/></svg>
<span id="t38" class="t " style="left:103px;top:662px;height:16px;line-height:16px;font-size:12px;color:#000;letter-spacing:-0.338px;">Kerberos</span>
<svg class="b" style="left:82px;top:681px;" width="14" height="13" viewBox="0 0 14 13"><path d="M0.5 2.5 H6 L7.5 0.5 H13.5 V12.5 H0.5 Z" fill="#f2d27c" stroke="#d9b45e" stroke-width="1"/><path d="M1 4 H6.5 L7.5 3 H13 V12 H1 Z" fill="url(#fg)"/><rect x="8" y="1.2" width="4.5" height="1.3" fill="#fff"/><rect x="10.5" y="1.2" width="2" height="1.3" fill="#5b9bd8"/></svg>
<span id="t39" class="t " style="left:103px;top:680px;height:16px;line-height:16px;font-size:12px;color:#000;letter-spacing:-0.395px;">Locale Services</span>
<svg class="b" style="left:82px;top:699px;" width="14" height="13" viewBox="0 0 14 13"><path d="M0.5 2.5 H6 L7.5 0.5 H13.5 V12.5 H0.5 Z" fill="#f2d27c" stroke="#d9b45e" stroke-width="1"/><path d="M1 4 H6.5 L7.5 3 H13 V12 H1 Z" fill="url(#fg)"/><rect x="8" y="1.2" width="4.5" height="1.3" fill="#fff"/><rect x="10.5" y="1.2" width="2" height="1.3" fill="#5b9bd8"/></svg>
<span id="t40" class="t " style="left:103px;top:698px;height:16px;line-height:16px;font-size:12px;color:#000;letter-spacing:0.065px;">Logon</span>
<div class="b" style="left:80px;top:715px;width:127px;height:18px;background:#d9d9d9;"></div>
<svg class="b" style="left:82px;top:717px;" width="14" height="13" viewBox="0 0 14 13"><path d="M0.5 2.5 H6 L7.5 0.5 H13.5 V12.5 H0.5 Z" fill="#f2d27c" stroke="#d9b45e" stroke-width="1"/><path d="M1 4 H6.5 L7.5 3 H13 V12 H1 Z" fill="url(#fg)"/><rect x="8" y="1.2" width="4.5" height="1.3" fill="#fff"/><rect x="10.5" y="1.2" width="2" height="1.3" fill="#5b9bd8"/></svg>
<span id="t41" class="t " style="left:103px;top:716px;height:16px;line-height:16px;font-size:12px;color:#000;letter-spacing:0.220px;">Mitigation Options</span>
<svg class="b" style="left:67.5px;top:739px;" width="6" height="9" viewBox="0 0 6 9"><path d="M1 0.7 L5 4.5 L1 8.3" fill="none" stroke="#a0a0a0" stroke-width="1.6"/></svg>
<svg class="b" style="left:82px;top:735px;" width="14" height="13" viewBox="0 0 14 13"><path d="M0.5 2.5 H6 L7.5 0.5 H13.5 V12.5 H0.5 Z" fill="#f2d27c" stroke="#d9b45e" stroke-width="1"/><path d="M1 4 H6.5 L7.5 3 H13 V12 H1 Z" fill="url(#fg)"/><rect x="8" y="1.2" width="4.5" height="1.3" fill="#fff"/><rect x="10.5" y="1.2" width="2" height="1.3" fill="#5b9bd8"/></svg>
<span id="t42" class="t " style="left:103px;top:734px;height:16px;line-height:16px;font-size:12px;color:#000;letter-spacing:0.034px;">Net Logon</span>
<svg class="b" style="left:67.5px;top:757px;" width="6" height="9" viewBox="0 0 6 9"><path d="M1 0.7 L5 4.5 L1 8.3" fill="none" stroke="#a0a0a0" stroke-width="1.6"/></svg>
<svg class="b" style="left:82px;top:753px;" width="14" height="13" viewBox="0 0 14 13"><path d="M0.5 2.5 H6 L7.5 0.5 H13.5 V12.5 H0.5 Z" fill="#f2d27c" stroke="#d9b45e" stroke-width="1"/><path d="M1 4 H6.5 L7.5 3 H13 V12 H1 Z" fill="url(#fg)"/><rect x="8" y="1.2" width="4.5" height="1.3" fill="#fff"/><rect x="10.5" y="1.2" width="2" height="1.3" fill="#5b9bd8"/></svg>
<span id="t43" class="t " style="left:103px;top:752px;height:16px;line-height:16px;font-size:12px;color:#000;letter-spacing:-0.037px;">Power Management</span>
<svg class="b" style="left:82px;top:771px;" width="14" height="13" viewBox="0 0 14 13"><path d="M0.5 2.5 H6 L7.5 0.5 H13.5 V12.5 H0.5 Z" fill="#f2d27c" stroke="#d9b45e" stroke-width="1"/><path d="M1 4 H6.5 L7.5 3 H13 V12 H1 Z" fill="url(#fg)"/><rect x="8" y="1.2" width="4.5" height="1.3" fill="#fff"/><rect x="10.5" y="1.2" width="2" height="1.3" fill="#5b9bd8"/></svg>
<span id="t44" class="t " style="left:103px;top:770px;height:16px;line-height:16px;font-size:12px;color:#000;letter-spacing:-0.348px;">Recovery</span>
<div class="b" style="left:346px;top:85px;width:16px;height:703px;background:#f0f0f0;"></div>
<svg class="b" style="left:353.5px;top:94.5px;" width="1" height="1"><path d="M-3.5 2 L0 -1.8 L3.5 2" fill="none" stroke="#505050" stroke-width="2"/></svg>
<div class="b" style="left:346px;top:102px;width:15.5px;height:690px;background:#cdcdcd;"></div>
<div class="b" style="left:3px;top:788px;width:360px;height:16px;background:#f0f0f0;"></div>
<svg class="b" style="left:11px;top:795.2px;" width="1" height="1"><path d="M2 -3.5 L-1.8 0 L2 3.5" fill="none" stroke="#505050" stroke-width="2"/></svg>
<div class="b" style="left:20px;top:788px;width:270px;height:15.5px;background:#cdcdcd;"></div>
<svg class="b" style="left:337px;top:795.5px;" width="1" height="1"><path d="M-2 -3.5 L1.8 0 L-2 3.5" fill="none" stroke="#505050" stroke-width="2"/></svg>
<div class="b" style="left:367px;top:83px;width:626px;height:704px;background:#fff;border-top:1px solid #828282;border-left:1px solid #828282;"></div>
<span id="t45" class="t " style="left:375px;top:89px;height:16px;line-height:16px;font-size:12px;color:#000;letter-spacing:-0.051px;">Setting</span>
<div class="b" style="left:718px;top:85px;width:1px;height:23px;background:#e5e5e5;"></div>
<div class="b" style="left:818px;top:85px;width:1px;height:23px;background:#e5e5e5;"></div>
<span id="t46" class="t " style="left:756px;top:89px;height:16px;line-height:16px;font-size:12px;color:#000;letter-spacing:-0.406px;">State</span>
<span id="t47" class="t " style="left:892.5px;top:89px;height:16px;line-height:16px;font-size:12px;color:#000;letter-spacing:0.212px;">Comment</span>
<svg class="b" style="left:374px;top:111px;" width="13" height="15" viewBox="0 0 13 15"><path d="M0.5 0.5 H9.5 L12.5 3.5 V14.5 H0.5Z" fill="#fff" stroke="#9a9a9a" stroke-width="0.9"/><path d="M12.5 3.5 V14.5 H0.5" fill="none" stroke="#6e6e6e" stroke-width="0.9"/><path d="M9.5 0.5 V3.5 H12.5" fill="none" stroke="#9a9a9a" stroke-width="0.8"/><rect x="2.8" y="3.7" width="2" height="1.8" fill="#111"/><rect x="2.8" y="6.8" width="2" height="1.6" fill="#777"/><rect x="2.8" y="9.8" width="2" height="1.8" fill="#111"/><path d="M6 4.8 H10 M6 7.7 H10 M6 10.8 H10" stroke="#9a95c2" stroke-width="1"/></svg>
<span id="t48" class="t " style="left:391px;top:110.5px;height:16px;line-height:16px;font-size:12px;color:#000;letter-spacing:-0.003px;">Untrusted Font Blocking</span>
<span id="t49" class="t " style="left:728.3px;top:110.5px;height:16px;line-height:16px;font-size:12px;color:#000;letter-spacing:0.168px;">Not configured</span>
<span id="t50" class="t " style="left:911px;top:110.5px;height:16px;line-height:16px;font-size:12px;color:#000;letter-spacing:0.078px;">No</span>
<div class="b" style="left:389px;top:128px;width:601px;height:18.6px;background:#ededed;"></div>
<svg class="b" style="left:374px;top:130px;" width="13" height="15" viewBox="0 0 13 15"><defs><pattern id="dth" width="2" height="2" patternUnits="userSpaceOnUse"><rect width="2" height="2" fill="#f2f6ff"/><rect width="1" height="1" fill="#3b74d6"/><rect x="1" y="1" width="1" height="1" fill="#3b74d6"/></pattern></defs><path d="M0 0 H10 L13 3 V15 H0Z" fill="url(#dth)"/><path d="M3 5 L4.6 6.2 M3 8.2 H4.6 M3 10.4 L4.6 11.6" stroke="#10204a" stroke-width="1.6"/></svg>
<span id="t51" class="t " style="left:391px;top:129.5px;height:16px;line-height:16px;font-size:12px;color:#000;letter-spacing:0.010px;">Process Mitigation Options</span>
<span id="t52" class="t " style="left:728.3px;top:129.5px;height:16px;line-height:16px;font-size:12px;color:#000;letter-spacing:0.168px;">Not configured</span>
<span id="t53" class="t " style="left:911px;top:129.5px;height:16px;line-height:16px;font-size:12px;color:#000;letter-spacing:0.078px;">No</span>
<div class="b" style="left:368px;top:769px;width:624px;height:18px;background:#f0f0f0;"></div>
<svg class="b" style="left:980px;top:772px;" width="6" height="9" viewBox="0 0 6 9"><path d="M0 0 L5.2 4.5 L0 9Z" fill="#505050"/></svg>
<div class="b" style="left:364px;top:786px;width:629px;height:2px;background:#6e6e6e;"></div>
<div class="b" style="left:367px;top:788px;width:626px;height:18px;background:#f0f0f0;"></div>
<svg class="b" style="left:367px;top:788px;" width="140" height="18" viewBox="0 0 140 18"><path d="M1 0 L9 17 H63.7 L71 0" fill="#f0f0f0" stroke="#5a5a5a" stroke-width="1"/><path d="M65.5 0 L73 17 H126.5 L134 0" fill="#fff" stroke="#5a5a5a" stroke-width="1"/></svg>
<span id="t54" class="t " style="left:379px;top:789px;height:16px;line-height:16px;font-size:12px;color:#000;letter-spacing:-0.465px;">Extended</span>
<span id="t55" class="t " style="left:443px;top:789px;height:16px;line-height:16px;font-size:12px;color:#000;letter-spacing:-0.275px;">Standard</span>
<div class="b" style="left:0px;top:806px;width:993px;height:1px;background:#dcdcdc;"></div>
<span id="t56" class="t " style="left:3px;top:811px;height:16px;line-height:16px;font-size:12px;color:#000;letter-spacing:-0.113px;">2 setting(s)</span>
<div class="b" style="left:771px;top:808px;width:1px;height:20px;background:#d7d7d7;"></div>
<div class="b" style="left:904px;top:808px;width:1px;height:20px;background:#d7d7d7;"></div>
<div class="b" style="left:989px;top:808px;width:1px;height:20px;background:#d7d7d7;"></div>
<div class="b" style="left:0px;top:0px;width:993px;height:830px;border:1px solid #4a4a4a;border-left:2px solid #7a7a7a;border-right:2px solid #555;pointer-events:none;"></div>
<div class="b" style="left:296px;top:160px;width:686px;height:636px;background:#f0f0f0;border:1px solid #a0a0a0;box-shadow:0 1px 10px 0 rgba(0,0,0,0.24);"></div>
<div class="b" style="left:297px;top:161px;width:684px;height:30px;background:#fff;"></div>
<svg class="b" style="left:305px;top:168px;" width="16" height="14" viewBox="0 0 16 14"><rect x="4.6" y="0.5" width="11" height="9.6" rx="0.8" fill="#d2d2d2" stroke="#8e8e8e" stroke-width="0.8"/><rect x="5.9" y="1.8" width="8.4" height="6.8" fill="#1f2f9f"/><path d="M9.8 1.8 H14.3 V6.4 Q11.2 5.6 9.8 1.8Z" fill="#b4c0ee" opacity="0.9"/><rect x="9.2" y="10.2" width="3.2" height="1.8" fill="#a8a8a8"/><rect x="7.6" y="11.8" width="6.2" height="1.2" fill="#9a9a9a"/><circle cx="3.7" cy="5.6" r="2.8" fill="#4e3224"/><circle cx="3.9" cy="6.5" r="1.8" fill="#c48a66"/><path d="M0.2 14 Q0.2 9.2 3.8 9.2 Q8 9.2 8.2 14Z" fill="#8fbde9" stroke="#6a9ad6" stroke-width="0.5"/></svg>
<span id="t57" class="t " style="left:326.5px;top:167.5px;height:16px;line-height:16px;font-size:12px;color:#999999;letter-spacing:-0.001px;">Process Mitigation Options</span>
<svg class="b" style="left:862px;top:175px;" width="10" height="1" viewBox="0 0 10 1"><rect width="10" height="1" fill="#d4d4d4"/></svg>
<div class="b" style="left:907px;top:170px;width:10px;height:10px;border:1px solid #8c8c8c;"></div>
<svg class="b" style="left:953px;top:170px;" width="10" height="10" viewBox="0 0 10 10"><path d="M0.3 0.3 L9.7 9.7 M9.7 0.3 L0.3 9.7" stroke="#8c8c8c" stroke-width="1.1"/></svg>
<svg class="b" style="left:303px;top:205px;" width="16" height="16" viewBox="0 0 16 16"><rect x="0.5" y="0.5" width="15" height="15" fill="#ecece6" stroke="#5a5a5a" stroke-width="1"/><path d="M0 0 H2.5 V1 H1 V3.5 H0Z M16 0 H13.5 V1 H15 V3.5 H16Z M15 12 H16 V15 H15Z" fill="#1f7a78"/><rect x="1" y="1" width="14" height="2.6" fill="#7b7cc2"/><rect x="1" y="3.6" width="14" height="0.8" fill="#fff"/><rect x="1" y="4.4" width="14" height="1.6" fill="#e8c63c"/><rect x="1" y="4.4" width="8" height="1.6" fill="#5a9a4a"/><rect x="10.5" y="4.8" width="2.5" height="1.2" fill="#222"/><circle cx="5" cy="10.6" r="3.9" fill="#e4e4ee" stroke="#8e8e9c" stroke-width="0.6"/><path d="M5 10.6 L2 8 A3.9 3.9 0 0 1 6.5 7Z" fill="#c8b8e0" opacity="0.7"/><path d="M5 10.6 L8 13 A3.9 3.9 0 0 1 3.5 14.2Z" fill="#b8e0c0" opacity="0.7"/><circle cx="5" cy="10.6" r="1.1" fill="#333"/><rect x="9" y="7.4" width="5.6" height="7.2" fill="#f8f0b4" stroke="#a89850" stroke-width="0.6"/><path d="M10.2 9.6 H13.4 M10.2 11.6 H13.4" stroke="#6a78c8" stroke-width="1"/><path d="M10.2 13.5 H13.4" stroke="#d8b83a" stroke-width="0.9"/></svg>
<span id="t58" class="t " style="left:327.8px;top:202.7px;height:16px;line-height:16px;font-size:12px;color:#000;letter-spacing:-0.017px;">Process Mitigation Options</span>
<div class="b" style="left:672px;top:206px;width:101px;height:26px;background:#e1e1e1;border:1px solid #adadad;"></div>
<span id="t59" class="t " style="left:680.2px;top:211px;height:16px;line-height:16px;font-size:12px;color:#000;letter-spacing:-0.174px;">Previous Setting</span>
<div class="b" style="left:781px;top:206px;width:101px;height:26px;background:#cccccc;border:1px solid #bfbfbf;"></div>
<span id="t60" class="t " style="left:799.3px;top:211px;height:16px;line-height:16px;font-size:12px;color:#a0a0a0;letter-spacing:-0.056px;text-shadow:1px 1px 0 #fff;">Next Setting</span>
<div class="b" style="left:306px;top:252px;width:13px;height:13px;border:1px solid #333;border-radius:50%;background:#fff;"></div>
<span id="t61" class="t " style="left:323.7px;top:250.5px;height:16px;line-height:16px;font-size:12px;color:#000;letter-spacing:-0.008px;">Not Configured</span>
<div class="b" style="left:306px;top:280px;width:13px;height:13px;border:1px solid #333;border-radius:50%;background:#fff;"></div><div class="b" style="left:309px;top:283px;width:7px;height:7px;border-radius:50%;background:#222;"></div>
<span id="t62" class="t " style="left:323.7px;top:278.5px;height:16px;line-height:16px;font-size:12px;color:#000;letter-spacing:-0.464px;">Enabled</span>
<div class="b" style="left:306px;top:308px;width:13px;height:13px;border:1px solid #333;border-radius:50%;background:#fff;"></div>
<span id="t63" class="t " style="left:323.7px;top:306.5px;height:16px;line-height:16px;font-size:12px;color:#000;letter-spacing:-0.338px;">Disabled</span>
<span id="t64" class="t " style="left:428.7px;top:246px;height:16px;line-height:16px;font-size:12px;color:#000;letter-spacing:-0.295px;">Comment:</span>
<div class="b" style="left:514px;top:248px;width:458px;height:72px;background:#fff;border:1px solid #7a7a7a;"></div>
<div class="b" style="left:954px;top:249px;width:17px;height:70px;background:#f0f0f0;"></div>
<svg class="b" style="left:961.7px;top:258.5px;" width="1" height="1"><path d="M-3.5 2 L0 -1.8 L3.5 2" fill="none" stroke="#b2b2b2" stroke-width="2"/></svg>
<svg class="b" style="left:961.7px;top:310px;" width="1" height="1"><path d="M-3.5 -2 L0 1.8 L3.5 -2" fill="none" stroke="#b2b2b2" stroke-width="2"/></svg>
<span id="t65" class="t " style="left:428.7px;top:324px;height:16px;line-height:16px;font-size:12px;color:#000;letter-spacing:-0.124px;">Supported on:</span>
<div class="b" style="left:514px;top:326px;width:458px;height:46px;background:#f0f0f0;border:1px solid #7a7a7a;"></div>
<div class="b" style="left:953px;top:327px;width:1px;height:44px;background:#fafafa;"></div>
<svg class="b" style="left:961.7px;top:336.5px;" width="1" height="1"><path d="M-3.5 2 L0 -1.8 L3.5 2" fill="none" stroke="#b2b2b2" stroke-width="2"/></svg>
<svg class="b" style="left:961.7px;top:361.5px;" width="1" height="1"><path d="M-3.5 -2 L0 1.8 L3.5 -2" fill="none" stroke="#b2b2b2" stroke-width="2"/></svg>
<span id="t66" class="t " style="left:520px;top:329px;height:16px;line-height:16px;font-size:12px;color:#000;letter-spacing:-0.245px;">At least Windows Server 2016, Windows 10</span>
<span id="t67" class="t " style="left:302px;top:385px;height:16px;line-height:16px;font-size:12px;color:#000;letter-spacing:-0.038px;">Options:</span>
<span id="t68" class="t " style="left:608.3px;top:385px;height:16px;line-height:16px;font-size:12px;color:#000;letter-spacing:-0.203px;">Help:</span>
<div class="b" style="left:300px;top:421px;width:298px;height:323px;background:#fff;border:1px solid #7a7a7a;"></div>
<span id="t69" class="t " style="left:306.2px;top:429.6px;height:16px;line-height:16px;font-size:12px;color:#000;letter-spacing:0.010px;">Process Mitigation Options</span>
<div class="b" style="left:463px;top:426px;width:56px;height:24px;background:#e1e1e1;border:2px solid #0078d7;"></div>
<span id="t70" class="t " style="left:472.6px;top:431px;height:16px;line-height:16px;font-size:12px;color:#000;letter-spacing:-0.237px;">Show...</span>
<div class="b" style="left:606px;top:421px;width:353px;height:323px;background:#fff;border:1px solid #7a7a7a;"></div>
<div class="b" style="left:959px;top:421px;width:17px;height:323px;background:#f0f0f0;"></div>
<svg class="b" style="left:967.5px;top:429.8px;" width="1" height="1"><path d="M-3.5 2 L0 -1.8 L3.5 2" fill="none" stroke="#505050" stroke-width="2"/></svg>
<svg class="b" style="left:967.5px;top:736px;" width="1" height="1"><path d="M-3.5 -2 L0 1.8 L3.5 -2" fill="none" stroke="#505050" stroke-width="2"/></svg>
<div class="b" style="left:960px;top:438px;width:15px;height:100px;background:#cdcdcd;"></div>
<span id="t71" class="t " style="right:42px;top:438px;height:16px;line-height:16px;font-size:12px;color:#000;letter-spacing:-0.049px;">This security feature provides a means to override individual</span>
<span id="t72" class="t " style="right:47px;top:453px;height:16px;line-height:16px;font-size:12px;color:#000;">process Mitigation Options settings. This can be used to enforce</span>
<span id="t73" class="t " style="right:80px;top:468px;height:16px;line-height:16px;font-size:12px;color:#000;">a number of security policies specific to applications. The</span>
<span id="t74" class="t " style="right:76px;top:483px;height:16px;line-height:16px;font-size:12px;color:#000;">application name is specified as the Value name, including</span>
<span id="t75" class="t " style="right:40px;top:498px;height:16px;line-height:16px;font-size:12px;color:#000;">extension. The Value is specified as a bit field with a series of flags</span>
<span id="t76" class="t " style="right:40px;top:513px;height:16px;line-height:16px;font-size:12px;color:#000;">in particular positions. Bits can be set to either 0 (setting is forced</span>
<span id="t77" class="t " style="right:44px;top:528px;height:16px;line-height:16px;font-size:12px;color:#000;">off), 1 (setting is forced on), or ? (setting retains its existing value</span>
<span id="t78" class="t " style="right:77px;top:543px;height:16px;line-height:16px;font-size:12px;color:#000;">prior to GPO evaluation). The recognized bit locations are:</span>
<span id="t79" class="t " style="right:58px;top:573px;height:16px;line-height:16px;font-size:12px;color:#000;">PROCESS_CREATION_MITIGATION_POLICY_DEP_ENABLE</span>
<span id="t80" class="t " style="right:80px;top:603px;height:16px;line-height:16px;font-size:12px;color:#000;">Enables data execution prevention (DEP) for the child</span>
<span id="t81" class="t " style="right:40px;top:663px;height:16px;line-height:16px;font-size:12px;color:#000;">PROCESS_CREATION_MITIGATION_POLICY_DEP_ATL_THUNK_EN</span>
<span id="t82" class="t " style="right:65px;top:693px;height:16px;line-height:16px;font-size:12px;color:#000;">Enables DEP-ATL thunk emulation for the child process.</span>
<span id="t83" class="t " style="right:64px;top:708px;height:16px;line-height:16px;font-size:12px;color:#000;">DEP-ATL thunk emulation causes the system to intercept NX</span>
<span id="t84" class="t " style="right:73px;top:723px;height:16px;line-height:16px;font-size:12px;color:#000;">faults that originate from the Active Template Library (ATL)</span>
<div class="b" style="left:736px;top:759px;width:73px;height:26px;background:#e1e1e1;border:1px solid #adadad;"></div>
<span id="t85" class="t " style="left:764px;top:764px;height:16px;line-height:16px;font-size:12px;color:#000;letter-spacing:-0.172px;">OK</span>
<div class="b" style="left:817px;top:759px;width:73px;height:26px;background:#e1e1e1;border:1px solid #adadad;"></div>
<span id="t86" class="t " style="left:835px;top:764px;height:16px;line-height:16px;font-size:12px;color:#000;letter-spacing:-0.060px;">Cancel</span>
<div class="b" style="left:898px;top:759px;width:73px;height:26px;background:#e1e1e1;border:1px solid #adadad;"></div>
<span id="t87" class="t " style="left:918.8px;top:764px;height:16px;line-height:16px;font-size:12px;color:#000;letter-spacing:0.274px;">Apply</span>
<div class="b" style="left:404px;top:443px;width:496px;height:336px;background:#f0f0f0;border:1px solid #1c6fb8;box-shadow:2px 3px 14px 1px rgba(0,0,0,0.33);"></div>
<div class="b" style="left:405px;top:444px;width:494px;height:30px;background:#fff;"></div>
<span id="t88" class="t " style="left:413.4px;top:450.7px;height:16px;line-height:16px;font-size:12px;color:#000;letter-spacing:-0.161px;">Show Contents</span>
<svg class="b" style="left:780px;top:458px;" width="10" height="1" viewBox="0 0 10 1"><rect width="10" height="1" fill="#d0d0d0"/></svg>
<div class="b" style="left:825px;top:453px;width:10px;height:10px;border:1px solid #111;"></div>
<svg class="b" style="left:871px;top:453px;" width="10" height="10" viewBox="0 0 10 10"><path d="M0.3 0.3 L9.7 9.7 M9.7 0.3 L0.3 9.7" stroke="#111" stroke-width="1.1"/></svg>
<span id="t89" class="t " style="left:419.4px;top:493.5px;height:15px;line-height:15px;font-size:11px;color:#000;letter-spacing:0.064px;">Process Mitigation Options</span>
<div class="b" style="left:417px;top:521px;width:470px;height:219px;background:#fff;border:1px solid #000;box-shadow:inset 1px 1px 0 #8c8c8c;"></div>
<div class="b" style="left:418px;top:542px;width:468px;height:1px;background:#a0a0a0;"></div>
<div class="b" style="left:418px;top:564px;width:468px;height:1px;background:#a0a0a0;"></div>
<div class="b" style="left:418px;top:586px;width:468px;height:1px;background:#a0a0a0;"></div>
<div class="b" style="left:419px;top:564px;width:39px;height:1px;background:#d4d4d4;"></div>
<div class="b" style="left:419px;top:586px;width:39px;height:1px;background:#d4d4d4;"></div>
<div class="b" style="left:458px;top:523px;width:1px;height:64px;background:#a0a0a0;"></div>
<div class="b" style="left:672px;top:523px;width:1px;height:64px;background:#a0a0a0;"></div>
<span id="t90" class="t " style="left:466.2px;top:526px;height:15px;line-height:15px;font-size:11px;color:#000;letter-spacing:-0.289px;">Value name</span>
<span id="t91" class="t " style="left:679.8px;top:526px;height:15px;line-height:15px;font-size:11px;color:#000;letter-spacing:-0.066px;">Value</span>
<span id="t92" class="t " style="left:461.7px;top:546.5px;height:15px;line-height:15px;font-size:11px;color:#000;letter-spacing:-0.301px;">mspaint.exe</span>
<span id="t93" class="t " style="left:676.6px;top:546.5px;height:15px;line-height:15px;font-size:11px;color:#000;letter-spacing:-0.077px;">???????1????1???111????11???</span>
<div class="b" style="left:844px;top:548px;width:1px;height:13px;background:#000;"></div>
<svg class="b" style="left:424.7px;top:551px;" width="11" height="8" viewBox="0 0 11 8"><path d="M0 6.8 H1.2 M2.2 6.8 H3.4" stroke="#555" stroke-width="1"/><path d="M4.2 7.2 L5 4.8 L8.8 1.2 L10.6 2.8 L6.8 6.4 Z" fill="#333"/></svg>
<svg class="b" style="left:427.2px;top:573.5px;" width="6" height="6" viewBox="0 0 6 6"><path d="M3 0 L3.8 2 L6 2.2 L4.3 3.6 L4.9 5.8 L3 4.6 L1.1 5.8 L1.7 3.6 L0 2.2 L2.2 2Z" fill="#444"/></svg>
<div class="b" style="left:721px;top:749px;width:77px;height:22px;background:#e1e1e1;border:1px solid #adadad;"></div>
<span id="t94" class="t " style="left:752px;top:752.2px;height:15px;line-height:15px;font-size:11px;color:#000;letter-spacing:0.397px;">OK</span>
<div class="b" style="left:806px;top:749px;width:77px;height:22px;background:#e1e1e1;border:1px solid #adadad;"></div>
<span id="t95" class="t " style="left:827.3px;top:752.2px;height:15px;line-height:15px;font-size:11px;color:#000;letter-spacing:-0.008px;">Cancel</span>
<svg class="b" style="left:889px;top:768px;" width="9" height="9" viewBox="0 0 9 9"><g fill="#bfbfbf"><rect x="6" y="0" width="2" height="2"/><rect x="3" y="3" width="2" height="2"/><rect x="6" y="3" width="2" height="2"/><rect x="0" y="6" width="2" height="2"/><rect x="3" y="6" width="2" height="2"/><rect x="6" y="6" width="2" height="2"/></g></svg>
</body></html>
